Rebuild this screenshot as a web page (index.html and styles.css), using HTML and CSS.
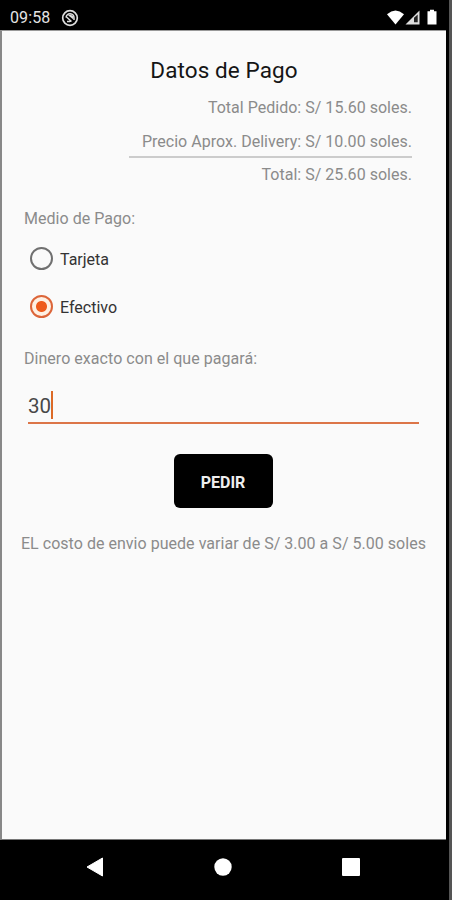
FILE: index.html
```html
<!DOCTYPE html>
<html lang="es">
<head>
<meta charset="utf-8">
<title>Datos de Pago</title>
<link rel="stylesheet" href="styles.css">
</head>
<body>
<div class="device">
  <header class="status">
    <span class="clock">09:58</span>
    <svg class="notice" width="18" height="18" viewBox="0 0 18 18"><circle cx="9" cy="9" r="7.3" fill="none" stroke="#ddd" stroke-width="1.7"/><path d="M5 8.500a4 4 0 0 1 8 .5v2M5.500 8l5 4.500M6 12.500h3" fill="none" stroke="#ddd" stroke-width="1.5"/><path d="M7 6.300l2.600-.9 2.800 2v3.200z" fill="#ddd"/></svg>
    <svg class="signals" width="52" height="18" viewBox="0 0 52 18"><path d="M0 5.2Q8.500-2 17 5.200L8.500 15.500z" fill="#fff"/><path d="M18.500 15.500L32.500 1.500V15.500z" fill="#ddd"/><path d="M27 13.300V8.800L30.700 5.500V13.300z" fill="#222"/><path d="M40.500 2.200h2.500V.8h4v1.400h2.500v13.300h-9z" fill="#fff"/></svg>
  </header>
  <main class="screen">
    <h1>Datos de Pago</h1>
    <section class="totals">
      <p class="pedido">Total Pedido: S/ 15.60 soles.</p>
      <p class="delivery">Precio Aprox. Delivery: S/ 10.00 soles.</p>
      <p class="total">Total: S/ 25.60 soles.</p>
    </section>
    <p class="label medio">Medio de Pago:</p>
    <div class="option"><span class="radio"></span><span class="choice">Tarjeta</span></div>
    <div class="option"><span class="radio checked"></span><span class="choice">Efectivo</span></div>
    <p class="label dinero">Dinero exacto con el que pagará:</p>
    <div class="field"><span class="amount">30</span><i class="caret"></i></div>
    <button class="pay" type="button">PEDIR</button>
    <p class="note">EL costo de envio puede variar de S/ 3.00 a S/ 5.00 soles</p>
  </main>
  <nav class="nav">
    <svg width="18" height="20" viewBox="0 0 18 20"><path d="M1 10L16.500 1V19z" fill="#fff" stroke="#fff" stroke-linejoin="round"/></svg>
    <svg width="18" height="18" viewBox="0 0 18 18"><circle cx="9" cy="9" r="8.700" fill="#fff"/></svg>
    <svg width="18" height="18" viewBox="0 0 18 18"><rect width="18" height="18" rx="1" fill="#fff"/></svg>
  </nav>
</div>
</body>
</html>
```
FILE: styles.css
```css
* { box-sizing: border-box; }
body { margin: 0; background: #000; font-family: Roboto, sans-serif; }
h1, p { margin: 0; font-weight: 400; white-space: nowrap; }
svg { display: block; flex: none; }
.device {
  width: 452px;
  height: 900px;
  display: flex;
  flex-direction: column;
  border-right: 3px solid #555;
  background: #000;
}
.status {
  height: 30px;
  display: flex;
  align-items: center;
  padding: 5px 10px 0 10px;
  color: #e4e4e4;
}
.clock { width: 51px; font-size: 16px; line-height: 20px; letter-spacing: .1px; }
.signals { margin: 0 0 0 auto; }
.screen {
  height: 810px;
  margin-right: 3px;
  border-left: 2px solid #888;
  border-top: 1px solid #999;
  border-bottom: 1px solid #777;
  background: #fafafa;
  display: flex;
  flex-direction: column;
}
h1 { align-self: center; margin-top: 24px; font-size: 22.500px; line-height: 30px; color: #151515; letter-spacing: .1px; }
.totals { align-self: flex-end; width: 283px; margin: 5px 34px 0 0; text-align: right; color: #8b8b8b; font-size: 16px; letter-spacing: .02px; }
.totals .pedido { line-height: 35px; }
.totals .delivery { padding-top: 2px; line-height: 29px; border-bottom: 2px solid #ccc; }
.totals .total { line-height: 33px; }
.label { padding-left: 22px; line-height: 24px; font-size: 16px; color: #8b8b8b; letter-spacing: .04px; }
.medio { margin-top: 16px; }
.option { display: flex; align-items: center; gap: 7px; height: 48px; padding-left: 28px; font-size: 16px; color: #333; }
.medio + .option { margin-top: 3px; }
.choice { padding-top: 2px; }
.radio { width: 23px; height: 23px; border: 2px solid #707070; border-radius: 50%; }
.radio.checked { border-color: #dc6539; background: radial-gradient(circle, #ee5b1c 5px, #fff0e3 6px); }
.dinero { margin-top: 17px; }
.field { display: flex; align-items: center; width: 391px; height: 36px; margin: 17px 0 0 26px; border-bottom: 2px solid #dc7548; font-size: 20.500px; color: #484848; }
.amount { padding-top: 2px; }
.caret { width: 2px; height: 28px; background: #dc6a27; }
.pay { align-self: center; width: 99px; height: 54px; margin: 30px 2px 0 0; padding: 2px 0 0; border: 0; border-radius: 6px; background: #000; color: #eee; font: 700 16px Roboto, sans-serif; }
.note { margin: 24px 0 0 19px; line-height: 24px; font-size: 16px; color: #8b8b8b; letter-spacing: .03px; }
.nav { flex: 1; display: flex; align-items: center; justify-content: space-between; padding: 0 89px 6px 86px; }
```
